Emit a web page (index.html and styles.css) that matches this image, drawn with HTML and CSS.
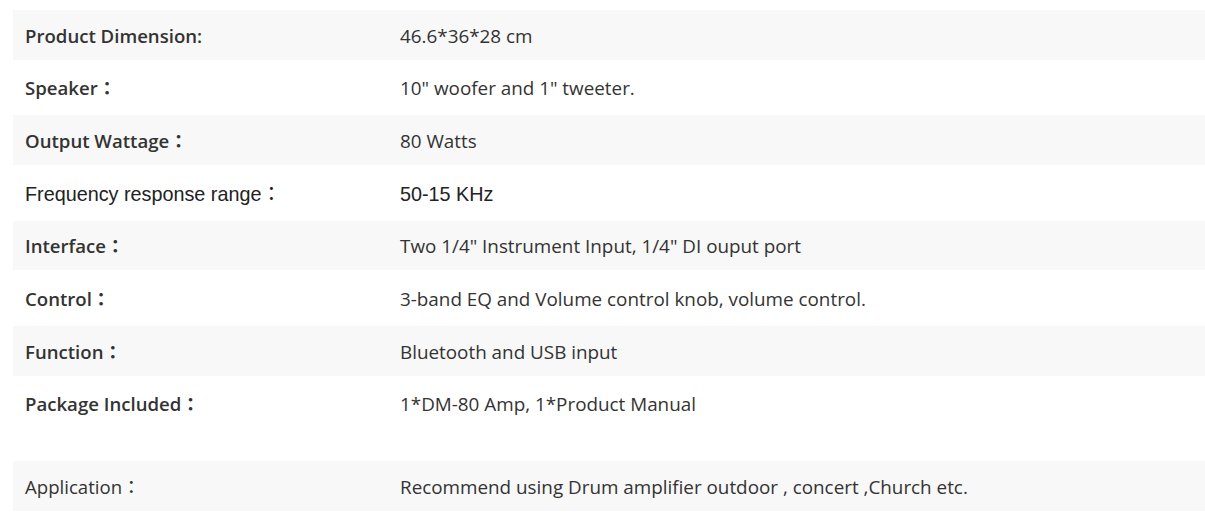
FILE: index.html
```html
<!DOCTYPE html>
<html>
<head>
<meta charset="utf-8">
<link rel="stylesheet" href="styles.css">
</head>
<body>
<div class="specs">
  <div class="row gray"><div class="label bold">Product Dimension:</div><div class="value">46.6*36*28 cm</div></div>
  <div class="row white"><div class="label bold">Speaker：</div><div class="value">10" woofer and 1" tweeter.</div></div>
  <div class="row gray"><div class="label bold">Output Wattage：</div><div class="value">80 Watts</div></div>
  <div class="row white"><div class="label arial">Frequency response range：</div><div class="value arial">50-15 KHz</div></div>
  <div class="row gray"><div class="label bold">Interface：</div><div class="value">Two 1/4" Instrument Input, 1/4" DI ouput port</div></div>
  <div class="row white"><div class="label bold">Control：</div><div class="value">3-band EQ and Volume control knob, volume control.</div></div>
  <div class="row gray"><div class="label bold">Function：</div><div class="value">Bluetooth and USB input</div></div>
  <div class="row white tall"><div class="label bold">Package Included：</div><div class="value">1*DM-80 Amp, 1*Product Manual</div></div>
  <div class="row gray"><div class="label">Application：</div><div class="value">Recommend using Drum amplifier outdoor , concert ,Church etc.</div></div>
</div>
</body>
</html>
```
FILE: styles.css
```css
html, body {
  margin: 0;
  padding: 0;
  background: #ffffff;
}
body {
  font-family: "Open Sans", "Noto Sans CJK TC", sans-serif;
  color: #333333;
  font-size: 18.6px;
  line-height: 26px;
}
.specs {
  padding: 10px 0 0 13px;
  display: flex;
  flex-direction: column;
}
.row {
  display: flex;
  align-items: center;
  height: 49.67px;
}
.row.gray { background: #f8f8f8; }
.row.white { height: 55.67px; }
.row.tall { height: 85.33px; align-items: flex-start; }
.row.tall .label, .row.tall .value { padding-top: 15px; }
.label {
  width: 375px;
  box-sizing: border-box;
  padding-left: 12px;
  padding-top: 2px;
  flex: none;
}
.value {
  padding-left: 12px;
  padding-top: 2px;
  font-size: 18.85px;
}
.bold { font-weight: 600; }
.arial {
  font-family: "Liberation Sans", Arial, "Noto Sans CJK TC", sans-serif;
  font-size: 19.8px;
  color: #222222;
}
```
